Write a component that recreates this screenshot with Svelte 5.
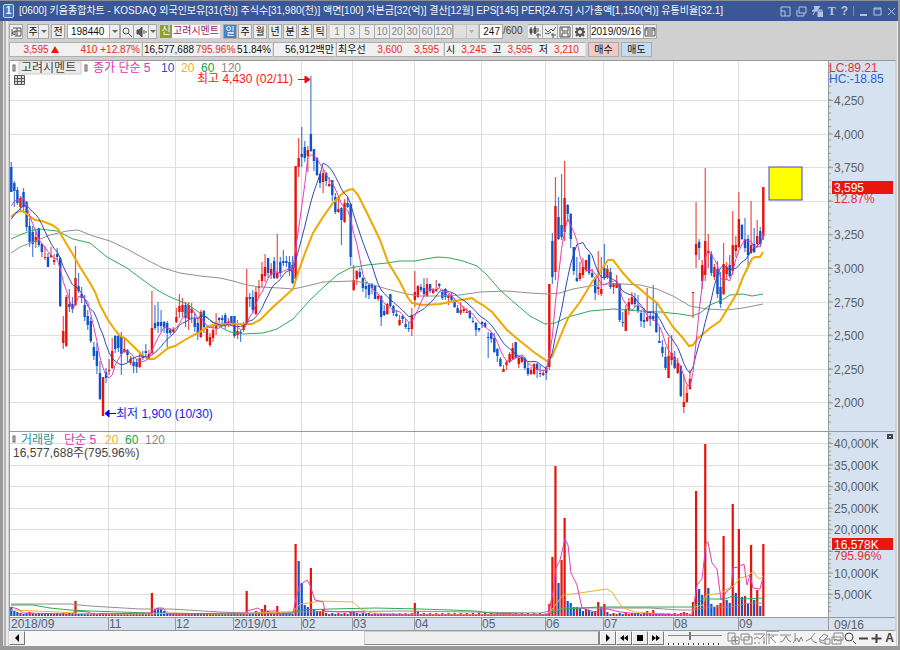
<script>
	const periods = ['일', '주', '월', '년', '분', '초', '틱'];
	const minutes = ['1', '3', '5', '10', '20', '30', '60', '120'];

	// u = up, d = down; high, body top, body bottom, low in chart units
	const rawCandles = `
		d162,167,192,192 d181,183,191,207 d187,190,203,205 u196,198,207,212 d188,192,207,213 d201,202,227,231 d218,226,242,247 d226,232,244,257
		u229,237,242,248 d228,228,245,247 d243,244,252,257 u246,257,258,260 d253,257,267,267 u247,255,257,258 u254,260,262,265 d248,254,257,260
		d257,258,306,307 u316,331,343,349 u295,297,346,347 d289,304,307,312 d297,304,309,313 u246,278,305,306 d273,286,291,293 d287,294,298,303
		d295,305,317,321 d310,316,325,330 d317,321,341,343 d342,347,356,360 d343,351,366,374 d361,373,399,400 u377,377,416,416 d368,372,378,383
		u359,370,371,375 u338,351,368,369 d335,336,349,353 d333,336,348,352 d332,337,354,375 u338,349,352,353 d349,350,355,362 u356,359,363,365
		d357,362,366,373 d359,362,367,373 u353,358,367,368 d351,356,358,360 d344,351,353,358 u350,354,359,360 u291,328,353,354 d305,323,328,330
		d302,322,326,333 d310,322,326,332 d321,322,327,333 d321,323,333,347 d328,330,333,335 u327,329,332,333 u308,317,322,323 u294,306,312,318
		u298,305,312,317 d302,305,318,327 u302,305,319,330 u303,309,313,323 d313,319,327,332 d318,323,334,340 u310,312,337,338 d310,311,327,333
		u327,329,341,342 u333,337,345,347 u325,330,338,342 u313,323,328,335 d317,318,320,323 d315,318,320,323 d313,315,323,329 u318,322,323,327
		d316,316,324,326 d316,316,336,338 u320,331,335,339 d330,332,334,342 u322,323,330,332 u269,297,323,325 d293,297,299,307 d290,297,310,313
		u287,292,314,315 u280,286,288,297 u262,274,281,287 u254,267,276,282 d258,258,273,278 u263,269,275,279 d257,261,278,279 u234,273,278,279
		d257,262,273,277 d250,261,263,266 d256,261,263,267 d256,262,270,276 d256,265,283,284 u166,166,279,280 u138,158,167,177 d127,154,157,167
		d141,147,158,162 u146,150,156,172 d76,134,151,152 d149,149,161,171 d157,158,175,176 d173,174,183,188 u170,173,182,193 d172,173,181,186
		u177,184,186,187 d180,180,195,201 d193,197,212,214 u199,209,212,213 d207,208,220,245 u199,203,222,223 d197,203,207,208 d203,204,257,266
		u265,280,290,291 u270,271,279,285 d268,272,277,278 d277,278,288,292 d282,286,289,298 d284,285,295,299 d283,284,288,294 d286,286,299,299
		u294,296,299,301 d295,296,317,326 d305,311,315,316 u303,304,314,315 d294,294,306,307 d305,306,313,316 d310,314,316,317 u315,320,325,326
		d315,316,319,323 d319,324,327,329 d322,328,329,332 u308,315,329,336 u271,292,300,307 u285,286,297,298 d284,287,290,292 d278,288,294,297
		u278,284,296,297 d284,284,291,293 u288,290,293,294 u280,289,291,292 d283,284,286,288 d290,292,298,300 d288,289,297,300 u294,295,298,305
		d293,296,300,302 d298,300,307,308 d305,308,313,313 u302,310,313,315 u306,309,311,313 u308,312,313,313 d310,311,318,319 d317,321,322,323
		d322,323,330,336 d328,328,330,332 d321,322,324,328 d322,323,327,328 d332,337,338,358 d332,333,339,343 d333,338,352,353 d348,349,356,362
		d357,359,366,367 u365,369,372,372 u360,362,365,370 u352,354,362,363 u343,348,359,360 d342,342,358,358 u357,358,364,368 u355,357,362,363
		d357,358,368,370 d363,368,374,376 u367,370,374,375 u363,364,374,375 d363,364,370,378 d365,373,374,377 u370,373,375,376 d367,368,373,380
		u284,284,367,370 d233,241,277,284 u177,206,272,280 d197,217,239,240 d174,225,237,240 u161,198,232,241 d204,205,214,222 d213,214,239,248
		d247,247,271,275 d257,278,281,282 u262,273,279,281 u258,267,275,278 u260,260,270,272 d254,255,273,275 d269,273,277,278 d277,277,293,300
		u251,287,289,295 u257,289,294,296 d244,268,278,280 u265,269,277,279 d268,272,287,289 u283,283,287,294 u275,283,288,288 d283,284,320,322
		d312,322,323,327 u305,309,331,331 u298,302,310,315 u292,297,304,305 d293,298,304,307 d295,306,311,313 d310,313,321,327 d308,320,322,328
		u288,317,321,322 d312,316,319,326 d285,316,319,321 d302,313,332,333 d327,341,343,343 d340,347,353,357 d347,357,368,370 u337,356,378,378
		u335,353,360,365 d351,357,368,369 u358,363,373,374 d365,366,396,397 u374,402,407,413 u385,393,402,403 u370,379,389,390 u292,292,293,318
		u202,244,255,268 d239,242,248,260 u260,265,281,289 u168,241,275,281 u234,251,253,268 d251,254,273,276 u264,267,277,280 d261,269,294,298
		d272,287,304,308 u243,264,294,295 u262,267,274,280 d255,265,276,278 u211,245,271,275 u236,245,251,257 u192,219,247,248 d224,225,239,240
		d218,239,248,252 d235,239,255,266 u201,245,253,254 d228,244,252,253 u220,236,244,247 d227,231,244,247 u187,187,236,240`;

	const step = 3.057;
	const candles = rawCandles.trim().split(/\s+/).map((item, i) => {
		const [high, top, bottom, low] = item.slice(1).split(',').map(Number);
		const up = item[0] === 'u';
		return { x: 11.3 + i * step, up, high, top, bottom, low, close: up ? top : bottom };
	});

	// closes before the first visible day, so the short averages start at the edge
	const leadIn = [236, 234, 232, 230, 230, 215, 210, 208, 205];

	function average(days) {
		const closes = [...leadIn, ...candles.map((c) => c.close)];
		return candles
			.map((c, i) => {
				const end = i + leadIn.length + 1;
				const part = closes.slice(end - days, end);
				return `${c.x.toFixed(1)},${(part.reduce((a, b) => a + b, 0) / days).toFixed(1)}`;
			})
			.join(' ');
	}

	const priceLines = [
		{ name: 'ma120', points: '11,253 20,247 33,242 50,235 67,231 78,230 93,236 110,241 127,249 147,260 163,268 180,273 200,276 220,278 233,281 247,285 260,287 280,288 293,289 307,286 323,282 353,281 367,283 387,289 407,294 420,296 440,296 460,295 480,292 507,291 530,293 547,294 560,293 573,289 590,286 607,284 623,284 640,285 657,289 673,296 690,306 707,309 727,310 743,308 763,304' },
		{ name: 'ma60', points: '11,239 20,235 30,231 40,229 57,231 73,239 90,243 107,257 127,268 143,280 157,290 170,297 187,304 200,313 213,322 222,328 230,332 243,334 263,333 277,329 293,319 310,300 327,284 337,275 350,268 367,265 387,263 400,261 415,261 425,259 438,257 450,258 463,261 477,266 487,275 500,290 517,305 530,316 545,324 555,323 568,317 590,311 613,309 640,311 660,312 680,314 692,316 700,313 710,305 722,300 730,295 743,294 752,296 763,294' },
		{ name: 'ma20', points: '11,217 17,212 23,211 28,215 35,220 42,221 52,225 58,229 63,238 72,253 80,267 90,283 95,292 100,305 108,320 115,330 120,336 125,338 133,346 142,355 148,359 154,359 162,353 168,348 175,346 183,341 192,336 200,332 207,327 213,325 222,324 230,324 252,324 260,320 272,308 283,298 293,289 298,273 305,253 313,233 323,217 333,203 343,193 348,190 353,189 358,195 367,213 380,240 388,262 400,282 408,298 412,303 422,305 440,304 450,302 472,298 477,302 483,305 492,312 507,330 520,341 535,353 547,361 552,357 558,342 568,318 580,302 592,282 600,272 608,260 613,260 623,273 632,283 640,289 648,296 657,303 663,312 673,327 682,337 689,346 693,345 698,338 703,334 710,328 720,321 728,308 737,293 743,277 752,259 755,257 760,257 763,252' },
		{ name: 'ma10', points: average(10) },
		{ name: 'ma5', points: average(5) }
	];

	// bar heights by day; negative means a blue bar, days left out stay near zero
	const volumes = {
		0: -9, 1: -5, 2: -4, 6: 4, 21: 15, 30: 3, 46: 23, 47: -7, 48: -8, 49: -7, 50: -5, 77: 25, 80: 5, 81: -4, 82: 7, 83: 11,
		84: -5, 87: 10, 93: 72, 94: -55, 95: -33, 96: -11, 97: -9, 98: 48, 99: -6, 100: -5, 101: 5, 102: 7, 111: 5, 112: -5, 132: 13,
		133: -5, 176: 12, 177: 59, 178: 150, 179: -33, 180: 56, 181: 98, 182: -15, 183: -13, 184: -9, 185: 9, 186: -8, 187: -5, 188: 7,
		189: -6, 190: -4, 191: 5, 192: 14, 193: -9, 194: 12, 195: -4, 208: 5, 210: 6, 220: 4, 223: 14, 224: 125, 225: -27, 226: -21,
		227: 172, 228: -28, 229: -12, 230: -9, 231: 11, 232: 13, 233: 80, 234: -16, 235: -13, 236: 112, 237: -23, 238: 87, 239: -19,
		240: 20, 241: -12, 242: 71, 243: -16, 244: 26, 245: -10, 246: 72
	};
	const bars = candles.map((c, i) => {
		const v = volumes[i] ?? (c.up ? 1 : -1) * (2 + (i % 2));
		return { x: c.x, up: v > 0, height: Math.abs(v) };
	});

	const volumeLines = [
		{ name: 'ma120', points: '11,604 70,604 90,606 140,609 170,609 220,612 245,613 290,612 400,611 540,613 565,608 650,608 680,610 692,610 710,607 730,607 750,603 763,603' },
		{ name: 'ma60', points: '11,605 33,605 50,608 70,610 90,611 150,613 230,614 293,613 300,610 330,609 375,608 420,609 450,610 475,611 490,613 545,615 552,613 563,609 600,607 693,607 703,599 725,599 733,596 742,599 763,598' },
		{ name: 'vol20', points: '11,610 60,612 90,614 150,614 170,613 220,614 293,612 300,604 310,603 320,601 353,602 362,610 372,613 400,614 540,615 549,613 557,603 563,595 580,593 600,590 607,589 613,593 617,600 623,608 635,612 650,613 690,615 695,607 703,605 706,595 722,593 727,589 732,587 737,582 740,578 748,576 753,571 757,577 760,579 763,576' },
		{ name: 'ma5', points: '11,607 18,609 23,613 72,614 75,611 88,612 93,614 152,613 157,608 163,608 168,614 245,613 247,611 258,608 262,611 277,611 280,614 293,613 296,598 300,585 307,580 310,585 315,600 323,602 325,611 340,612 363,612 370,615 548,615 553,592 556,568 560,560 565,539 568,545 571,573 577,585 582,608 595,612 603,608 620,612 640,614 692,615 695,598 697,585 702,579 706,543 708,542 712,563 717,569 721,600 727,591 731,588 733,568 738,567 744,564 747,585 750,575 753,588 760,589 763,577' }
	];

	const months = [
		[10, '2018/09'], [108, '11'], [175, '12'], [233, '2019/01'], [301, '02'], [352, '03'],
		[414, '04'], [481, '05'], [545, '06'], [603, '07'], [673, '08'], [738, '09']
	];
	const prices = ['4,250', '4,000', '3,750', '', '3,250', '3,000', '2,750', '2,500', '2,250', '2,000'].map((label, i) => ({ label, y: 100 + i * 33.6 }));
	const amounts = ['40,000K', '35,000K', '30,000K', '25,000K', '20,000K', '', '10,000K', '5,000K'].map((label, i) => ({ label, y: 443 + i * 21.6 }));
	const priceTicks = Array.from({ length: 54 }, (_, i) => 66 + i * 6.72);
	const amountTicks = Array.from({ length: 42 }, (_, i) => 434 + i * 4.32);

	const tools = [
		{ name: '새 창', path: 'M1 1h7v8H1zM5 5h7v7H5zM8.500 6v5M6 8.500h5' },
		{ name: '겹치기', path: 'M1 2h8v6H1zM4 5h8v7H4z' },
		{ name: '추세', path: 'M1 2h11M1 7l3-2 3 2 4-4M1 11h2M5 11h2M10 11h2M11 5v6' },
		{ name: '기준선', path: 'M3 1v11M1 3h11M4 6l4-2M5 6l5 5', pressed: true },
		{ name: '이동선', path: 'M1 3h11M1 10l3-1 3-5 2 4 3 2' },
		{ name: '변곡선', path: 'M3 1v8M1 11l4-5 2 4 2-5 2 4' },
		{ name: '추세선', path: 'M1 9l4-2 5-6M6 6l3 4 3 1' },
		{ name: '지우개', path: 'M1 7l5-5 4 2-5 5zM2 8v2l6 2M7 7h5v5H7z' },
		{ name: '저장', path: 'M3 1h9v7H3zM1 5h9v7H1zM3 9l2-2 2 2 2-1' },
		{ name: '찾기', path: 'M9 9l3 3M9 5a4 4 0 1 1-8 0a4 4 0 1 1 8 0', strong: true },
		{ name: '축소', path: 'M2 6.500h9', bold: true },
		{ name: '확대', path: 'M1.500 6.500h10M6.500 2v9', bold: true }
	];
</script>

<svelte:head><title>키움종합차트</title></svelte:head>

<div class="window">
	<header class="titlebar">
		<span class="number">1</span>
		<h1>[0600] 키움종합차트 - KOSDAQ 외국인보유[31(천)] 주식수[31,980(천)] 액면[100] 자본금[32(억)] 결산[12월] EPS[145] PER[24.75] 시가총액[1,150(억)] 유통비율[32.1]</h1>
		<nav class="window-buttons">
			<button aria-label="창 크기"><svg width="11" height="11"><path d="M1 1h9v9H1zM1 5h4v5" /></svg></button>
			<button aria-label="창 복사"><svg width="11" height="11"><path d="M3 1h7v6H3zM1 4v6h7V7" /></svg></button>
			<button aria-label="잠금"><svg width="11" height="11"><path class="solid" d="M2 0h6L6 3v2H0l3-2zM3 5L1 9M6 6h5v5H6z" /><path d="M7 6V4h3v2" /></svg></button>
			<button aria-label="글꼴" class="serif">T</button>
			<button aria-label="도움말">?</button>
			<i></i>
			<button aria-label="최소화"><svg width="9" height="11"><path d="M1 9h7" stroke-width="2" /></svg></button>
			<button aria-label="최대화"><svg width="9" height="11"><path d="M1 2h7v7H1zM1 3h7" /></svg></button>
			<button aria-label="닫기"><svg width="9" height="11"><path d="M1 2l7 7M8 2L1 9" /></svg></button>
		</nav>
	</header>

	<main>
		<div class="toolbar">
			<button class="tool" aria-label="목록"><svg width="12" height="12"><path d="M3 2h8v8H5M2 3v7M5 5h6M7 2v8M2 7l3-2v4z" /></svg></button>
			<button class="tool split">주</button>
			<button class="tool arrow" aria-label="주식 선택"></button>
			<button class="tool all">전</button>
			<input class="code" aria-label="종목코드" value="198440" />
			<button class="tool arrow" aria-label="최근 종목"></button>
			<button class="tool" aria-label="종목 찾기"><svg width="12" height="12"><circle cx="5" cy="5" r="3" /><path d="M7 7l4 4" /></svg></button>
			<button class="tool sound" aria-label="소리"><svg width="13" height="12"><path d="M2 4h2l3-3v10L4 8H2z" fill="#555" /><path d="M9 4v4M11 5v2" /></svg></button>
			<button class="tool arrow last" aria-label="소리 설정"></button>
			<span class="new">신</span>
			<span class="stock">고려시멘트</span>
			<div class="periods">
				{#each periods as period, i}
					<button class="tool" class:active={i === 0}>{period}</button>
				{/each}
			</div>
			<div class="minutes">
				{#each minutes as minute}
					<button class="tool">{minute}</button>
				{/each}
			</div>
			<select aria-label="분 선택" disabled><option></option></select>
			<input class="count" aria-label="조회 수" value="247" />
			<span class="total">/600</span>
			<div class="icons">
				<button class="tool" aria-label="지표 추가"><svg width="12" height="12"><path class="dark" d="M1 3h2v4H1zM5 2h2v5H5z" /><path d="M2 1v8M6 0v8M9 2v4M9 7v5M7 9h5" /></svg></button>
				<button class="tool" aria-label="선 추가"><svg width="12" height="12"><path d="M1 3l3 3 3-3 2 2 3-4M1 7l3 1 3-2M9 7v5M7 9h5" /></svg></button>
				<button class="tool" aria-label="저장하기"><svg width="12" height="12"><path d="M1 1h10v10H1zM3 1v4h6V1M3 11V7h6v4" /></svg></button>
				<button class="tool" aria-label="설정"><svg width="12" height="12"><circle cx="6" cy="6" r="3" stroke-width="2" /><path d="M6 1v2M6 9v2M1 6h2M9 6h2M2 2l2 2M8 8l2 2M10 2L8 4M4 8l-2 2" stroke-width="2" /></svg></button>
			</div>
			<input class="date" aria-label="조회일" value="2019/09/16" />
			<button class="tool" aria-label="달력"><svg width="12" height="12"><path d="M1 2h10v8H1zM1 4h10M3 1v2M9 1v2M3 6h6M3 8h6" /></svg></button>
		</div>

		<div class="quotes">
			<div class="cell change red"><b>3,595</b><span class="up"></span><b>410</b><b>+12.87%</b></div>
			<div class="cell volume"><span>16,577,688</span><b class="red">795.96%</b><span>51.84%</span></div>
			<div class="cell money">56,912백만</div>
			<div class="cell best"><span>최우선</span><b class="red">3,600</b><b class="red">3,595</b></div>
			<div class="cell range"><span>시</span><b class="red">3,245</b><span>고</span><b class="red">3,595</b><span>저</span><b class="red">3,210</b></div>
			<button class="buy">매수</button>
			<button class="sell">매도</button>
		</div>

		<svg class="chart" viewBox="9 60 887 571" role="img" aria-label="고려시멘트 일봉 차트">
			<rect x="10" y="61" width="885" height="556" fill="#fff" />
			<rect x="828" y="61" width="67" height="556" class="axis" />
			<rect x="10" y="617" width="885" height="14" class="axis" />

			<g class="grid">
				{#each months.slice(1) as [x]}
					<line x1={x + 0.5} x2={x + 0.5} y1="61" y2="616" />
				{/each}
				{#each [...prices, ...amounts] as row}
					<line x1="10" x2="828" y1={row.y + 0.5} y2={row.y + 0.5} />
				{/each}
			</g>

			{#each candles as c}
				<g class={c.up ? 'rise' : 'fall'}>
					<rect class="wick" x={c.x - 0.6} y={c.high} width="1.2" height={c.low - c.high} />
					<rect x={c.x - 1.2} y={c.top} width="2.400" height={Math.max(c.bottom - c.top, 1)} />
				</g>
			{/each}
			{#each bars as bar}
				<rect class={bar.up ? 'rise' : 'fall'} x={bar.x - 1.1} y={616 - bar.height} width="2.200" height={bar.height} />
			{/each}
			{#each [...priceLines, ...volumeLines] as line}
				<polyline class="line {line.name}" points={line.points} />
			{/each}

			<rect x="769" y="167" width="33" height="33" fill="#ff0" stroke="#4444c8" />

			<g class="frame">
				<path d="M9.500 631V60.500H895.500M9.500 431.500H895M9.500 617.500H895M828.500 61V631M9.500 630.500H895" />
				{#each priceTicks as y}
					<line x1="828" x2="831" y1={y} y2={y} />
				{/each}
				{#each amountTicks as y}
					<line x1="828" x2="831" y1={y} y2={y} />
				{/each}
				{#each [...prices, ...amounts] as row}
					<line x1="828" x2="833" y1={row.y + 0.5} y2={row.y + 0.5} />
				{/each}
				{#each months.slice(1) as [x]}
					<line x1={x + 0.5} x2={x + 0.5} y1="617" y2="631" />
				{/each}
			</g>

			{#each prices as row}
				<text x="834" y={row.y + 5}>{row.label}</text>
			{/each}
			{#each amounts as row}
				<text x="834" y={row.y + 5}>{row.label}</text>
			{/each}
			{#each months as [x, label]}
				<text x={x + 1} y="628">{label}</text>
			{/each}
			<text x="834" y="629">09/16</text>

			<text x="829" y="72" class="t-red">LC:89.21</text>
			<text x="829" y="83" class="t-blue">HC:-18.85</text>
			<rect x="832" y="181" width="61" height="13" class="tag" />
			<text x="834" y="192" class="t-white">3,595</text>
			<text x="834" y="203" class="t-red">12.87%</text>
			<rect x="832" y="538" width="61" height="12" class="tag" />
			<text x="834" y="549" class="t-white">16,578K</text>
			<text x="834" y="560" class="t-red">795.96%</text>
			<rect x="887" y="434" width="6" height="5" fill="#444" />
			<rect x="889" y="436" width="2" height="1" fill="#ddd" />

			<rect x="19" y="62" width="62" height="12" class="name" />
			<g class="handle">
				<rect x="13" y="65" width="2" height="6" />
				<rect x="85" y="65" width="2" height="6" />
				<rect x="13" y="436" width="2" height="6" />
			</g>
			<text x="21" y="72" class="t-dark">고려시멘트</text>
			<text x="93" y="72" class="t-pink">종가 단순 5</text>
			<text x="161" y="72" class="t-navy">10</text>
			<text x="181" y="72" class="t-gold">20</text>
			<text x="201" y="72" class="t-green">60</text>
			<text x="221" y="72" class="t-gray">120</text>
			<path d="M14.500 75.500h10v9h-10zM14.500 78.500h10M14.500 81.500h10M17.500 75.500v9M21.500 75.500v9" stroke="#555" fill="#ddd" />
			<text x="197" y="83" class="t-hot">최고 4,430 (02/11)</text>
			<path d="M298 79.500h7M305 76l5 3.500-5 3.500z" stroke="#f00" fill="#f00" />
			<text x="116" y="418" class="t-low">최저 1,900 (10/30)</text>
			<path d="M109 413.500h7M109 410l-4 3.500 4 3.500z" stroke="#00f" fill="#00f" />

			<text x="21" y="444" class="t-teal">거래량</text>
			<text x="64" y="444" class="t-pink">단순 5</text>
			<text x="105" y="444" class="t-gold">20</text>
			<text x="125" y="444" class="t-green">60</text>
			<text x="145" y="444" class="t-gray">120</text>
			<text x="13" y="457" class="t-dark">16,577,688주(795.96%)</text>
		</svg>

		<footer>
			<button class="push" aria-label="왼쪽으로"><svg width="10" height="10"><path d="M7 1v8L3 5z" /></svg></button>
			<div class="track"><div class="thumb"></div></div>
			<button class="push" aria-label="재생"><svg width="10" height="10"><path d="M3 1v8l4-4z" /></svg></button>
			<button class="push" aria-label="뒤로"><svg width="10" height="10"><path d="M5 2v6L1 5zM9 2v6L5 5z" /></svg></button>
			<button class="push" aria-label="정지"><svg width="10" height="10"><path d="M2 2h6v6H2z" /></svg></button>
			<button class="push" aria-label="앞으로"><svg width="10" height="10"><path d="M1 2v6l4-3zM5 2v6l4-3z" /></svg></button>
			<input class="speed" type="range" aria-label="속도" min="0" max="10" value="4" />
			<div class="tools">
				{#each tools as tool}
					<button aria-label={tool.name} class:pressed={tool.pressed}>
						<svg width="13" height="13"><path class:strong={tool.strong} class:bold={tool.bold} d={tool.path} /></svg>
					</button>
				{/each}
				<button class="auto">A</button>
			</div>
		</footer>
	</main>
</div>

<style>
	:global(body) {
		margin: 0;
		background: #d0d0d0;
	}

	.window {
		font: 10px/12px 'Liberation Sans', 'Noto Sans CJK KR', sans-serif;
		color: #111;
		background: #d0d0d0;
		border-bottom: 4px solid #989898;
		overflow: hidden;
	}

	button,
	input,
	select {
		box-sizing: border-box;
		margin: 0;
		padding: 0;
		font: inherit;
		color: inherit;
		border: 0;
		border-radius: 0;
		background: none;
	}

	button svg {
		display: block;
		flex: none;
		fill: none;
		stroke: #555;
	}

	.dark {
		fill: #555;
	}

	.titlebar {
		display: flex;
		align-items: center;
		box-sizing: border-box;
		height: 21px;
		padding: 0 2px 0 3px;
		color: #f2f5ff;
		background: #3b5896;
		border-top: 1px solid #8d8d98;
		border-right: 2px solid #999;
	}

	.number {
		width: 9px;
		border: 1px solid #c4d4f4;
		border-radius: 2px;
		background: #4b74b8;
		font-weight: bold;
		text-align: center;
	}

	h1 {
		flex: 1;
		margin: 0 0 0 5px;
		font-size: 10px;
		font-weight: normal;
		line-height: 16px;
		white-space: nowrap;
		overflow: hidden;
	}

	.window-buttons {
		display: flex;
		align-items: center;
		gap: 5px;
		color: #b4c2e0;
		font-size: 12px;
		font-weight: bold;
	}

	.window-buttons svg {
		stroke: #b4c2e0;
	}

	.window-buttons .solid {
		fill: #b4c2e0;
	}

	.window-buttons i {
		width: 1px;
		height: 10px;
		background: #7088b8;
	}

	.serif {
		font-family: 'Liberation Serif', serif;
	}

	main {
		padding: 3px 4px 0 9px;
		background: linear-gradient(90deg, #999 0 3px, #e4e4e4 3px 4px, #b4b4b4 4px 6px, #ececec 6px 8px, #d0d0d0 8px calc(100% - 3px), #f0f0f0 calc(100% - 3px) calc(100% - 2px), #999 calc(100% - 2px));
	}

	.toolbar,
	.quotes {
		display: flex;
		height: 16px;
		white-space: nowrap;
	}

	.toolbar {
		margin-bottom: 2px;
	}

	.tool {
		display: flex;
		flex: none;
		align-items: center;
		justify-content: center;
		width: 14px;
		height: 15px;
		border: 1px solid #aaa;
		background: #ededed;
	}

	.split {
		width: 12px;
		margin-left: 4px;
	}

	.arrow {
		width: 10px;
		border-left: 0;
	}

	.arrow::after {
		content: '';
		border: 3px solid transparent;
		border-top-color: #666;
		border-bottom: 0;
	}

	.all {
		margin: 0 2px;
	}

	.code {
		width: 43px;
		height: 15px;
		padding-left: 3px;
		border: 1px solid #aaa;
		background: #fff;
	}

	.sound {
		width: 15px;
		border-left: 0;
	}

	.last {
		width: 8px;
		margin-right: 3px;
	}

	.new {
		flex: none;
		width: 12px;
		height: 13px;
		margin-top: 1px;
		color: #fff;
		background: #8f9f2c;
		text-align: center;
	}

	.stock {
		flex: none;
		width: 48px;
		height: 13px;
		margin-top: 1px;
		color: #a01858;
		background: #fff;
		text-align: center;
	}

	.periods {
		display: flex;
		gap: 1px;
		margin: 0 3px;
	}

	.active {
		color: #fff;
		background: #4a80c4;
	}

	.minutes {
		display: flex;
		color: #888;
	}

	.minutes .tool {
		width: 15px;
		border-left: 0;
	}

	.minutes .tool:last-child {
		width: 18px;
	}

	select {
		appearance: none;
		width: 26px;
		height: 15px;
		border: 1px solid #bbb;
		background:
			linear-gradient(45deg, transparent 50%, #aaa 50%) right 6px top 5px / 3px 3px no-repeat,
			linear-gradient(-45deg, transparent 50%, #aaa 50%) right 3px top 5px / 3px 3px no-repeat,
			linear-gradient(#bbb, #bbb) right 11px top 0 / 1px 15px no-repeat,
			#e8e8e8;
	}

	.count {
		width: 24px;
		height: 15px;
		padding-right: 2px;
		border: 1px solid #aaa;
		background: #fff;
		text-align: right;
	}

	.total {
		width: 25px;
		padding-top: 1px;
		color: #444;
	}

	.icons {
		display: flex;
		margin-right: 2px;
	}

	.icons .tool {
		width: 15px;
		border-left: 0;
	}

	.date {
		width: 53px;
		height: 15px;
		border: 1px solid #aaa;
		border-right: 0;
		background: #fff;
	}

	.quotes {
		margin-bottom: 2px;
	}

	.quotes b {
		font-weight: normal;
	}

	.cell {
		display: flex;
		flex: none;
		align-items: center;
		justify-content: flex-end;
		box-sizing: border-box;
		height: 15px;
		padding: 0 1px;
		border: 1px solid #b0b0b0;
		border-right-color: #ddd;
		background: #f1f1f1;
	}

	.red {
		color: #e8281c;
	}

	.up {
		margin-left: 2px;
		border: 4px solid transparent;
		border-top: 0;
		border-bottom: 7px solid #e8180c;
	}

	.change {
		width: 133px;
	}

	.change b:nth-child(3) {
		margin: 0 3px 0 22px;
	}

	.volume {
		width: 131px;
		justify-content: space-between;
	}

	.money {
		width: 63px;
	}

	.best {
		width: 108px;
		justify-content: space-between;
		padding-right: 4px;
	}

	.range {
		width: 142px;
		justify-content: space-between;
		padding-right: 6px;
	}

	.buy,
	.sell {
		width: 31px;
		height: 15px;
		margin-left: 2px;
		border: 1px solid #aaa;
	}

	.buy {
		background: #f6c8c4;
	}

	.sell {
		background: #c4dcf2;
	}

	.chart {
		display: block;
		width: 100%;
		height: auto;
		font-family: 'Liberation Sans', 'Noto Sans CJK KR', sans-serif;
		font-size: 12px;
	}

	.chart text {
		fill: #5a6068;
	}

	.axis {
		fill: #d7e2f0;
	}

	.grid line {
		stroke: #dedede;
		shape-rendering: crispEdges;
	}

	.frame path {
		fill: none;
		stroke: #999;
	}

	.frame line {
		stroke: #999;
	}

	.rise {
		fill: #e8140a;
	}

	.fall {
		fill: #0c54cc;
	}

	.wick {
		opacity: 0.75;
	}

	.line {
		fill: none;
		stroke-width: 1;
	}

	.ma5 {
		stroke: #e23cb8;
	}

	.ma10 {
		stroke: #3048b8;
	}

	.ma20 {
		stroke: #f0a800;
		stroke-width: 2;
	}

	.vol20 {
		stroke: #f0b030;
	}

	.ma60 {
		stroke: #30a858;
	}

	.ma120 {
		stroke: #909090;
	}

	.tag {
		fill: #e8160c;
	}

	.name {
		fill: #ececec;
		stroke: #ccc;
	}

	.handle {
		fill: #ccc;
		stroke: #666;
	}

	.chart .t-red { fill: #e03030; }
	.chart .t-blue { fill: #2864d0; }
	.chart .t-white { fill: #fff; }
	.chart .t-dark { fill: #444; }
	.chart .t-pink { fill: #e030c0; }
	.chart .t-navy { fill: #3048c8; }
	.chart .t-gold { fill: #f0b020; }
	.chart .t-green { fill: #20a048; }
	.chart .t-gray { fill: #888; }
	.chart .t-hot { fill: #f01818; }
	.chart .t-low { fill: #1818f0; }
	.chart .t-teal { fill: #309098; }

	footer {
		display: flex;
		height: 15px;
		background: #f2f2f2;
	}

	.push {
		display: flex;
		flex: none;
		align-items: center;
		justify-content: center;
		width: 16px;
		height: 14px;
		border: 1px solid #fff;
		border-right-color: #777;
		border-bottom-color: #777;
		background: #eee;
	}

	.push svg {
		fill: #000;
		stroke: none;
	}

	.track {
		display: flex;
		flex: 1;
		justify-content: flex-end;
		background: #f8f8f8;
	}

	.thumb {
		box-sizing: border-box;
		width: 41%;
		height: 14px;
		border: 1px solid #ccc;
		border-right: 2px solid #888;
		border-bottom-color: #888;
		background: #eee;
	}

	.speed {
		appearance: none;
		width: 54px;
		height: 14px;
		margin: 0 5px 0 4px;
		background:
			linear-gradient(#888, #888) 0 4px / 100% 1px no-repeat,
			repeating-linear-gradient(90deg, #444 0 1px, transparent 1px 5px) 0 12px / 100% 2px no-repeat;
	}

	.speed::-webkit-slider-thumb {
		appearance: none;
		width: 2px;
		height: 8px;
		margin-bottom: 5px;
		background: #777;
	}

	.tools {
		display: flex;
	}

	.tools button {
		width: 13px;
		height: 14px;
	}

	.tools svg {
		stroke: #888;
	}

	.tools .strong {
		stroke: #444;
	}

	.tools .bold {
		stroke: #444;
		stroke-width: 2;
	}

	.tools .pressed {
		background: #fff;
		box-shadow: inset 1px 1px #aaa;
	}

	.tools .auto {
		color: #444;
		font: bold 12px/14px 'Liberation Sans', sans-serif;
	}
</style>
